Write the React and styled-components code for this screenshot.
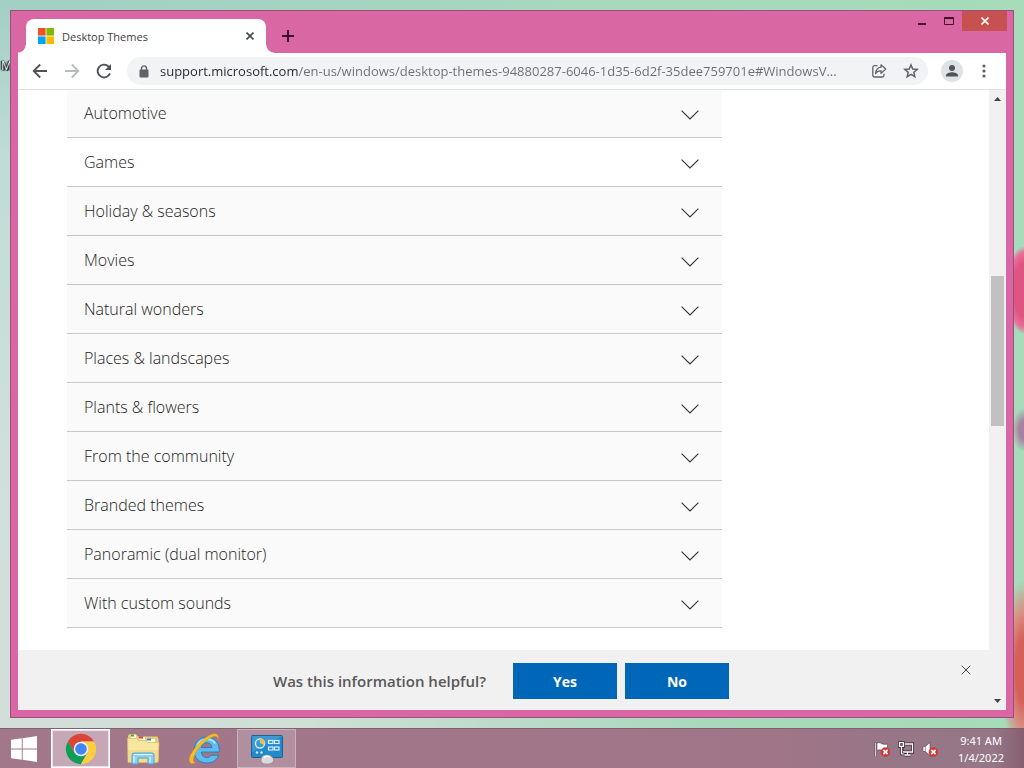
import React, { useState } from "react";
import styled, { createGlobalStyle } from "styled-components";

const GlobalStyle = createGlobalStyle`
  *, *::before, *::after { box-sizing: border-box; }
  body { margin: 0; font-family: "Open Sans", "Noto Sans", sans-serif; }
  button { font-family: inherit; border: 0; padding: 0; background: none; color: inherit; }
  svg { display: block; flex: none; }
`;

const Desktop = styled.div`
  position: relative;
  isolation: isolate;
  display: flex;
  flex-direction: column;
  height: 100vh;
  min-height: 480px;
  overflow: hidden;
  background: linear-gradient(to right, #a3cfc4, #a8d8bd 60%, #a6dcb9);
`;

const Wallpaper = styled.div`
  position: absolute;
  inset: 0;
  z-index: -1;
  background:
    radial-gradient(ellipse 18px 44px at 100% 290px, #dd5580 0 60%, #e8719a 85%, transparent),
    radial-gradient(ellipse 12px 22px at 100% 430px, #a880a0 0 40%, transparent),
    radial-gradient(ellipse 24px 90px at 100% 670px, #d4605a 0 35%, #d88f84 65%, transparent),
    linear-gradient(to right, #d3ded8, #cfe0d6 30%, transparent 70%) bottom / 100% 50px no-repeat,
    linear-gradient(to bottom, #a3cfc4, #bfdcd6 20%, #cfe0da 60%, #d3ded8) left / 12px 100% no-repeat;
`;

const IconLabel = styled.span`
  position: absolute;
  z-index: -1;
  left: 1px;
  top: 58px;
  font-size: 12px;
  line-height: 16px;
  color: #fff;
  text-shadow: 0 0 1px #000, 1px 1px 1px #000, -1px 0 1px #000, 0 0 2px #000;
`;

const Window = styled.main`
  display: flex;
  flex-direction: column;
  flex: 1;
  min-height: 0;
  margin: 10px;
  padding: 0 7px 7px;
  background: #d867a3;
  border: 1px solid #9a4f7c;
`;

const TitleBar = styled.header`
  display: flex;
  align-items: flex-end;
  height: 42px;
  padding-left: 8px;
`;

const Tab = styled.div`
  position: relative;
  display: flex;
  align-items: center;
  width: 240px;
  height: 34px;
  padding: 0 8px 0 12px;
  gap: 8px;
  background: #fff;
  border-radius: 8px 8px 0 0;
  font-size: 11px;
  color: #3c4043;
  &::before, &::after {
    content: "";
    position: absolute;
    bottom: 0;
    width: 8px;
    height: 8px;
  }
  &::before { left: -8px; background: radial-gradient(circle at 0 0, transparent 7px, #fff 8px); }
  &::after { right: -8px; background: radial-gradient(circle at 100% 0, transparent 7px, #fff 8px); }
`;

const TabTitle = styled.span`
  flex: 1;
`;

const IconButton = styled.button`
  display: grid;
  place-items: center;
  width: ${(p) => p.$size || 16}px;
  height: ${(p) => p.$size || 16}px;
  flex: none;
  color: ${(p) => p.$color || "#44474a"};
  border-radius: 50%;
  background: ${(p) => p.$fill || "none"};
`;

const NewTab = styled(IconButton)`
  margin: 0 0 3px 8px;
`;

const Captions = styled.div`
  display: flex;
  align-self: flex-start;
  margin-left: auto;
  margin-right: -1px;
`;

const Caption = styled.button`
  display: grid;
  place-items: center;
  width: ${(p) => (p.$close ? 45 : 27)}px;
  height: 20px;
  background: ${(p) => (p.$close ? "#c75050" : "none")};
  color: ${(p) => (p.$close ? "#fff" : "#43112e")};
`;

const Toolbar = styled.div`
  display: flex;
  align-items: center;
  height: 37px;
  padding: 0 14px;
  gap: 16px;
  background: #fff;
  border-bottom: 1px solid #dfe0e3;
`;

const AddressBar = styled.label`
  display: flex;
  flex: 1;
  align-items: center;
  min-width: 0;
  height: 28px;
  margin: 0 -3px 0 -1px;
  padding: 0 9px;
  gap: 16px;
  border-radius: 14px;
  background: #f1f3f4;
`;

const Address = styled.input`
  flex: 1;
  min-width: 0;
  margin-left: -8px;
  padding: 0;
  border: 0;
  outline: 0;
  font: 13px/20px "Open Sans", "Noto Sans", sans-serif;
  color: transparent;
  background: linear-gradient(to right, #25282c 138px, #6a6e73 138px);
  background-clip: text;
  -webkit-background-clip: text;
`;

const Profile = styled(IconButton)`
  margin-right: -3px;
`;

const Viewport = styled.div`
  display: flex;
  flex: 1;
  min-height: 0;
  background: #fff;
`;

const Page = styled.div`
  display: flex;
  flex-direction: column;
  flex: 1;
  min-width: 0;
`;

const Article = styled.section`
  flex: 1;
  min-height: 0;
  overflow: hidden;
  padding-left: 49px;
`;

const ThemeList = styled.ul`
  list-style: none;
  margin: -1px 0 0;
  padding: 0;
  max-width: 655px;
`;

const ThemeItem = styled.li`
  border-bottom: 1px solid #c8c8c8;
  background: ${(p) => (p.$hovered ? "#fff" : "#fafafa")};
`;

const ThemeToggle = styled.button`
  display: flex;
  align-items: center;
  justify-content: space-between;
  width: 100%;
  height: 48px;
  padding: 0 23px 0 17px;
  font-size: 16px;
  font-weight: 300;
  line-height: 20px;
  color: #1c1c1c;
  text-align: left;
  svg { margin-top: 3px; }
`;

const ThemeNote = styled.p`
  margin: 0;
  padding: 8px 18px 16px;
  font-size: 14px;
`;

const Feedback = styled.footer`
  display: grid;
  grid-template-columns: 1fr auto 1fr;
  align-items: center;
  height: 60px;
  padding: 2px 15px 0 10px;
  background: #f1f1f1;
`;

const FeedbackBody = styled.div`
  grid-column: 2;
  display: flex;
  align-items: center;
  gap: 8px;
`;

const Question = styled.span`
  margin-right: 19px;
  font-size: 15px;
  font-weight: 600;
  color: #585858;
`;

const Answer = styled.button`
  width: 104px;
  height: 36px;
  background: #0067b8;
  color: #fff;
  font-size: 14px;
  font-weight: 700;
`;

const Dismiss = styled(IconButton)`
  justify-self: end;
  align-self: start;
  margin-top: 10px;
`;

const ScrollTrack = styled.div`
  display: flex;
  flex-direction: column;
  align-items: center;
  justify-content: space-between;
  width: 17px;
  padding: 0 2px;
  background: #f1f1f1;
`;

const ScrollArrow = styled.div`
  display: grid;
  place-items: center;
  height: 18px;
`;

const ScrollRail = styled.div`
  flex: 1;
  width: 13px;
  display: flex;
  flex-direction: column;
`;

const ScrollThumb = styled.div`
  width: 13px;
  height: 150px;
  background: #c1c1c1;
`;

const ScrollGap = styled.div`
  height: 168px;
`;

const Taskbar = styled.nav`
  display: flex;
  align-items: stretch;
  height: 40px;
  flex: none;
  padding-right: 20px;
  background: linear-gradient(to right, #a27789, #a07588 75%, #967687 90%, #957788 97%, #875f70);
  border-top: 1px solid #7f6072;
`;

const StartButton = styled.button`
  display: grid;
  place-items: center;
  width: 48px;
  margin-right: 3px;
`;

const TaskButton = styled.button`
  display: grid;
  place-items: center;
  width: 59px;
  margin-right: 3px;
  border: 1px solid ${(p) => (p.$active ? "#fff" : p.$open ? "#cbb2bf" : "transparent")};
  box-shadow: ${(p) => (p.$active ? "inset 0 0 0 1px #ece0e7" : "none")};
  background: ${(p) => (p.$active ? "#c5a7b5" : p.$open ? "#b28f9f" : "none")};
`;

const Tray = styled.div`
  display: flex;
  align-items: center;
  gap: 8px;
  margin-left: auto;
  margin-right: 20px;
`;

const TrayButton = styled.button`
  width: 16px;
  height: 16px;
`;

const Clock = styled.time`
  align-self: center;
  text-align: center;
  font-family: "Noto Sans", "Open Sans", sans-serif;
  font-size: 11px;
  line-height: 17px;
  color: #fff;
  white-space: nowrap;
`;

const Cross = ({ size = 8, width = 2 }) => (
  <svg width={size} height={size} viewBox="0 0 10 10" fill="none" stroke="currentColor" strokeWidth={width}>
    <path d="M.7.7 9.3 9.3M9.3.7.7 9.3" />
  </svg>
);

const MicrosoftMark = () => (
  <svg width="16" height="16" viewBox="0 0 16 16">
    <path fill="#f25022" d="M0 0h7.6v7.6H0z" />
    <path fill="#7fba00" d="M8.4 0H16v7.6H8.4z" />
    <path fill="#00a4ef" d="M0 8.4h7.6V16H0z" />
    <path fill="#ffb900" d="M8.4 8.4H16V16H8.4z" />
  </svg>
);

const Arrow = ({ flip }) => (
  <svg width="16" height="16" viewBox="0 0 16 16" fill="none" stroke="currentColor" strokeWidth="1.8">
    <path d={flip ? "M1 8h13M7.8 1.5 14.3 8l-6.5 6.5" : "M15 8H2M8.2 1.5 1.7 8l6.5 6.5"} />
  </svg>
);

const Reload = () => (
  <svg width="16" height="16" viewBox="0 0 16 16">
    <path d="M14 10.4A6.400 6.400 0 1 1 12.700 3.600L14 5" fill="none" stroke="currentColor" strokeWidth="1.900" />
    <path d="M15 1v6H9z" fill="currentColor" />
  </svg>
);

const Lock = () => (
  <svg width="10" height="13" viewBox="0 0 10 13">
    <path d="M2.5 5V3.4a2.5 2.5 0 0 1 5 0V5" fill="none" stroke="#5f6368" strokeWidth="1.4" />
    <rect x="0.5" y="4.5" width="9" height="8" rx="1" fill="#5f6368" />
  </svg>
);

const Share = () => (
  <svg width="16" height="16" viewBox="0 0 16 16" fill="none" stroke="currentColor" strokeWidth="1.3" strokeLinejoin="round">
    <path d="M6.5 2.6H3.6A1.8 1.8 0 0 0 1.8 4.4v7.8A1.8 1.8 0 0 0 3.6 14h7.6a1.8 1.8 0 0 0 1.8-1.8v-1.4" />
    <path d="M10 1.8 14.8 6 10 10.2V7.9C7.5 7.8 5.8 8.7 4.6 10.6 4.9 7.4 6.5 4.7 10 4.2z" />
  </svg>
);

const Star = () => (
  <svg width="16" height="16" viewBox="0 0 16 16" fill="none" stroke="currentColor" strokeWidth="1.5">
    <path d="m8 2 1.75 4.05 4.4.4-3.33 2.9 1 4.3L8 11.4l-3.82 2.25 1-4.3-3.33-2.9 4.4-.4z" />
  </svg>
);

const Person = () => (
  <svg width="14" height="14" viewBox="0 0 14 14" fill="#50545a">
    <circle cx="7" cy="4" r="3" />
    <path d="M1 12.5v-1.3C1 9.2 4.9 8.2 7 8.2s6 1 6 3v1.3z" />
  </svg>
);

const Dots = () => (
  <svg width="4" height="14" viewBox="0 0 4 14" fill="#5f6368">
    <circle cx="2" cy="2" r="1.6" />
    <circle cx="2" cy="7" r="1.6" />
    <circle cx="2" cy="12" r="1.6" />
  </svg>
);

const Chevron = () => (
  <svg width="18" height="10" viewBox="0 0 18 10" fill="none" stroke="#333" strokeWidth="1.1">
    <path d="M.6.7 9 9 17.4.7" />
  </svg>
);

const Triangle = ({ down }) => (
  <svg width="7" height="4" viewBox="0 0 7 4" fill="#444">
    <path d={down ? "M0 0h7L3.5 4z" : "M0 4h7L3.5 0z"} />
  </svg>
);

const WindowsMark = () => (
  <svg width="28" height="26" viewBox="0 0 28 26" fill="#fff">
    <path d="M1 3.8 11.8 2.3v10.2H1zM12.7 2.2 27 0v12.5H12.7zM1 13.4h10.8v10.3L1 22.2zM12.7 13.4H27V26l-14.3-2.2z" />
  </svg>
);

const Chrome = () => (
  <svg width="32" height="32" viewBox="0 0 32 32">
    <path fill="#db4437" d="M2.9 8.4A15.2 15.2 0 0 1 29.2 8.5H16L9.5 19.8z" />
    <path fill="#0f9d58" d="M2.9 8.4A15.2 15.2 0 0 0 15.9 31.2L22.5 19.7H9.5z" />
    <path fill="#ffcd40" d="M29.2 8.5A15.2 15.2 0 0 1 15.9 31.2L22.5 19.7 16 8.5z" />
    <circle cx="16" cy="16" r="7.3" fill="#f1f1f1" />
    <circle cx="16" cy="16" r="5.8" fill="#4285f4" />
  </svg>
);

const Folder = () => (
  <svg width="34" height="32" viewBox="0 0 34 32">
    <path fill="#e8cf76" d="M2 2.5 4 1h6l2 2.5h19.5l1 3V28H2z" />
    <path fill="#fffbe8" d="M5 2h5v3H5zM13 4h6v3h-6zM21 6h8v3h-8z" />
    <path fill="#35a853" d="M5 1.5h3v2H5z" />
    <path fill="#dc3d31" d="M13 3.5h4v2h-4z" />
    <path fill="#2e86c8" d="M21 5.5h4v2h-4z" />
    <path fill="#f7e7a1" stroke="#d9bd65" strokeWidth=".7" d="M1.5 5.5h9l2 2h7l2 2h11.5L32 29.5H2z" />
    <path fill="#f0d781" d="M2 17h30v12H2z" opacity=".6" />
    <path fill="#8cd0f2" stroke="#4ba4d8" strokeWidth="1" d="M6 31V22q0-2 2-2h18q2 0 2 2v9h-6v-6H12v6z" />
    <path stroke="#dff5ff" strokeWidth="1.2" d="M7.5 21.5h19M8 23v6.5M24 24v5.5" />
  </svg>
);

const Explorer = () => (
  <svg width="32" height="32" viewBox="0 0 32 32" fill="none">
    <path
      fill="#5ebcf0"
      stroke="#1d7fc0"
      strokeWidth=".9"
      d="M30.2 19H12.3c.3 3.6 2.4 5.6 5.4 5.6 2.2 0 3.7-.9 4.5-2.4h7.3C27.8 27.300 23.500 30 17.700 30 10.200 30 5 25 5 17.600 5 10.100 10.300 4 17.700 4c8 0 13 5.800 12.500 15zM12.400 14.600h10.500c-.2-3-2.200-4.900-5.100-4.900-3 0-5 1.900-5.400 4.900z"
    />
    <path stroke="#b8eaff" strokeWidth="1.5" d="M8 13c1.600-3.800 5.100-6.700 9.500-6.700 3.800 0 7 1.600 8.800 4.200" />
    <path fill="#f7bd28" stroke="#d89012" strokeWidth=".4" d="M28.800 7.500C31 1 27-1.300 20 2.500 9 8.500-1.500 23 .5 28.600c1 2.500 4 2.300 6.500 1.100-2.500 0-3.300-2-2.300-5.200C7 17.300 14.500 8.700 22 4.600c5-2.500 7.500-1.600 6.800 2.900z" />
  </svg>
);

const ControlPanel = () => (
  <svg width="32" height="30" viewBox="0 0 32 30">
    <rect x=".5" y="1.5" width="31" height="22" rx="1" fill="#2489ca" stroke="#176296" />
    <path d="M1 2h30L1 18z" fill="#51aadd" opacity=".5" />
    <circle cx="9" cy="9.5" r="4.5" fill="#3a9cd4" stroke="#d7efff" strokeWidth="1.3" />
    <path d="M9 9V4a5 5 0 0 1 4 7z" fill="#f6bc45" />
    <g fill="none" stroke="#d7efff" strokeWidth="1.2">
      <rect x="17.500" y="6.500" width="4.500" height="3" />
      <rect x="23.500" y="6.500" width="4.500" height="3" />
      <rect x="17.500" y="13" width="4.500" height="3" />
      <rect x="23.500" y="13" width="4.500" height="3" />
    </g>
    <circle cx="6" cy="18.5" r="1.2" fill="#d7efff" />
    <circle cx="10.5" cy="18.5" r="1.2" fill="#d7efff" />
    <path d="M10 26c0-3 2-5 5.500-5s7 2 7 5-3 4-6.500 4-6-1-6-4z" fill="#dadada" stroke="#8b8b8b" strokeWidth=".7" />
    <path d="M13 23.500c2-1.500 4-1.500 6-.5" stroke="#fff" strokeWidth="1.4" fill="none" />
  </svg>
);

const ErrorDot = () => (
  <g>
    <circle cx="11.500" cy="11" r="4.500" fill="#dc3030" stroke="#b04048" strokeWidth=".5" />
    <path d="m9.300 8.800 4.400 4.400m0-4.400-4.400 4.400" stroke="#fff" strokeWidth="1.700" />
  </g>
);

const FlagIcon = () => (
  <svg width="16" height="16" viewBox="0 0 16 16">
    <path d="M1 1.500h1.500V16H1z" fill="#fff" stroke="#3c2c34" strokeWidth=".5" />
    <path d="M3 2c3-1 4 .5 5.500 1s3.500.5 5 0v7c-2 .8-4 .5-5.500-.5S5 8.500 3 9.500z" fill="#fff" stroke="#3c2c34" strokeWidth=".5" />
    <ErrorDot />
  </svg>
);

const NetworkIcon = () => (
  <svg width="16" height="16" viewBox="0 0 16 16" fill="none">
    <path d="M4.500 3h10v8h-10zM9.500 11v3M6.500 14h6" stroke="#35252e" strokeWidth="3" />
    <path d="M4.500 3h10v8h-10zM9.500 11v3M6.500 14h6" stroke="#fff" strokeWidth="1.3" />
    <path d="M1.500 1.500h4v4h-4zM3.500 5.500V13H6" stroke="#35252e" strokeWidth="2.600" />
    <path d="M3.500 5.500V13H6" stroke="#fff" strokeWidth="1.2" />
    <path d="M1.500 1.500h4v4h-4z" stroke="#fff" strokeWidth="1.2" fill="#7e6070" />
  </svg>
);

const SpeakerIcon = () => (
  <svg width="16" height="16" viewBox="0 0 16 16">
    <path d="M1 5.500h2.500L8 1.500v13l-4.500-4H1z" fill="#fff" stroke="#3c2c34" strokeWidth=".5" />
    <path d="M3.300 5.500v5" stroke="#7e6070" strokeWidth=".7" />
    <ErrorDot />
  </svg>
);

const themes = [
  "Automotive",
  "Games",
  "Holiday & seasons",
  "Movies",
  "Natural wonders",
  "Places & landscapes",
  "Plants & flowers",
  "From the community",
  "Branded themes",
  "Panoramic (dual monitor)",
  "With custom sounds",
];

export default function App() {
  const [open, setOpen] = useState(null);
  return (
    <Desktop>
      <GlobalStyle />
      <Wallpaper />
      <IconLabel>M</IconLabel>
      <Window>
        <TitleBar>
          <Tab>
            <MicrosoftMark />
            <TabTitle>Desktop Themes</TabTitle>
            <IconButton aria-label="Close tab"><Cross size={8} width={2} /></IconButton>
          </Tab>
          <NewTab $size={28} $color="#3b0f29" aria-label="New tab">
            <svg width="12" height="12" viewBox="0 0 12 12" stroke="currentColor" strokeWidth="2">
              <path d="M6 0v12M0 6h12" />
            </svg>
          </NewTab>
          <Captions>
            <Caption aria-label="Minimize">
              <svg width="8" height="12" viewBox="0 0 8 12" fill="currentColor"><path d="M0 8h8v2H0z" /></svg>
            </Caption>
            <Caption aria-label="Maximize">
              <svg width="10" height="8" viewBox="0 0 10 8" fill="none" stroke="currentColor">
                <path d="M.5 1v6.500h9V1" />
                <path d="M0 1h10" strokeWidth="2" />
              </svg>
            </Caption>
            <Caption $close aria-label="Close"><Cross size={8} width={2} /></Caption>
          </Captions>
        </TitleBar>
        <Toolbar>
          <IconButton $color="#505356" aria-label="Back"><Arrow /></IconButton>
          <IconButton $color="#b9bbbd" aria-label="Forward"><Arrow flip /></IconButton>
          <IconButton $color="#505356" aria-label="Reload"><Reload /></IconButton>
          <AddressBar>
            <IconButton as="span"><Lock /></IconButton>
            <Address
              aria-label="Address"
              defaultValue="support.microsoft.com/en-us/windows/desktop-themes-94880287-6046-1d35-6d2f-35dee759701e#WindowsV..."
            />
            <IconButton $color="#5f6368" aria-label="Share"><Share /></IconButton>
            <IconButton $color="#5f6368" aria-label="Bookmark"><Star /></IconButton>
          </AddressBar>
          <Profile $size={22} $fill="#dee1e6" aria-label="Profile"><Person /></Profile>
          <IconButton aria-label="Menu"><Dots /></IconButton>
        </Toolbar>
        <Viewport>
          <Page>
            <Article>
              <ThemeList>
                {themes.map((name) => (
                  <ThemeItem key={name} $hovered={name === "Games"}>
                    <ThemeToggle aria-expanded={open === name} onClick={() => setOpen(open === name ? null : name)}>
                      {name}
                      <Chevron />
                    </ThemeToggle>
                    {open === name && <ThemeNote>{name}</ThemeNote>}
                  </ThemeItem>
                ))}
              </ThemeList>
            </Article>
            <Feedback>
              <FeedbackBody>
                <Question>Was this information helpful?</Question>
                <Answer>Yes</Answer>
                <Answer>No</Answer>
              </FeedbackBody>
              <Dismiss aria-label="Dismiss"><Cross size={10} width={1} /></Dismiss>
            </Feedback>
          </Page>
          <ScrollTrack>
            <ScrollArrow><Triangle /></ScrollArrow>
            <ScrollRail>
              <ScrollGap />
              <ScrollThumb />
            </ScrollRail>
            <ScrollArrow><Triangle down /></ScrollArrow>
          </ScrollTrack>
        </Viewport>
      </Window>
      <Taskbar>
        <StartButton aria-label="Start"><WindowsMark /></StartButton>
        <TaskButton $active aria-label="Google Chrome"><Chrome /></TaskButton>
        <TaskButton aria-label="File Explorer"><Folder /></TaskButton>
        <TaskButton aria-label="Internet Explorer"><Explorer /></TaskButton>
        <TaskButton $open aria-label="Personalization"><ControlPanel /></TaskButton>
        <Tray>
          <TrayButton aria-label="Action Center"><FlagIcon /></TrayButton>
          <TrayButton aria-label="Network"><NetworkIcon /></TrayButton>
          <TrayButton aria-label="Volume"><SpeakerIcon /></TrayButton>
        </Tray>
        <Clock dateTime="2022-01-04T09:41">
          9:41 AM<br />1/4/2022
        </Clock>
      </Taskbar>
    </Desktop>
  );
}
